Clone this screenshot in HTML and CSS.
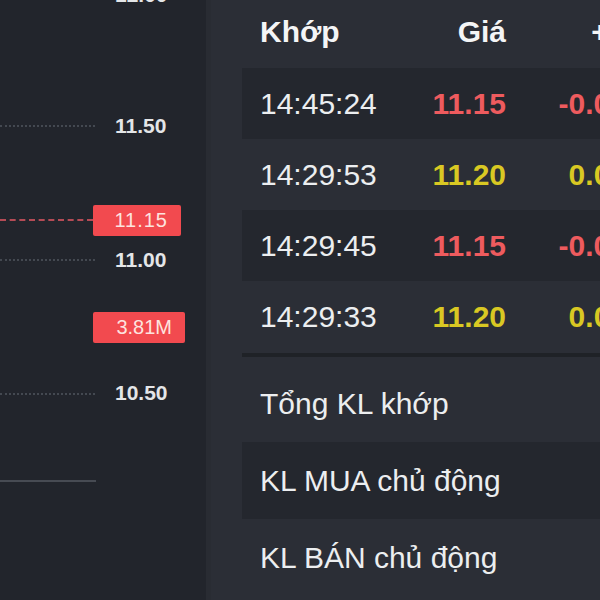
FILE: index.html
```html
<!DOCTYPE html>
<html lang="vi">
<head>
    <meta charset="UTF-8" />
    <title>Khớp lệnh</title>
    <link rel="stylesheet" href="styles.css">
</head>
<body>

<div class="screen">
    <div class="chart">
        <div class="grid-line" style="top: 125px"></div>
        <div class="grid-line" style="top: 259px"></div>
        <div class="grid-line" style="top: 393px"></div>
        <div class="base-line"></div>
        <div class="last-line"></div>

        <span class="axis-label" style="top: -17px">12.00</span>
        <span class="axis-label" style="top: 114px">11.50</span>
        <span class="axis-label" style="top: 248px">11.00</span>
        <span class="axis-label" style="top: 381px">10.50</span>

        <span class="axis-badge price-badge">11.15</span>
        <span class="axis-badge vol-badge">3.81M</span>
    </div>

    <div class="divider"></div>

    <div class="panel">
        <div class="trade-row head">
            <span>Khớp</span>
            <span class="num">Giá</span>
            <span class="num">+/-</span>
        </div>
        <div class="trade-row dark">
            <span>14:45:24</span>
            <span class="num down">11.15</span>
            <span class="num down">-0.05</span>
        </div>
        <div class="trade-row">
            <span>14:29:53</span>
            <span class="num ref">11.20</span>
            <span class="num ref">0.00</span>
        </div>
        <div class="trade-row dark">
            <span>14:29:45</span>
            <span class="num down">11.15</span>
            <span class="num down">-0.05</span>
        </div>
        <div class="trade-row">
            <span>14:29:33</span>
            <span class="num ref">11.20</span>
            <span class="num ref">0.00</span>
        </div>

        <div class="summary">
            <div class="summary-row">Tổng KL khớp</div>
            <div class="summary-row dark">KL MUA chủ động</div>
            <div class="summary-row">KL BÁN chủ động</div>
        </div>
    </div>
</div>

</body>
</html>
```

FILE: styles.css
```css
body {
    font-family: "Liberation Sans", Arial, sans-serif;
    margin: 0;
    padding: 0;
    background-color: #2b2e36;
    color: #eceef0;
    overflow: hidden;
}

.screen {
    display: flex;
    width: 600px;
    height: 600px;
    overflow: hidden;
}

/* price chart, only the right edge with the axis is visible */
.chart {
    position: relative;
    width: 206px;
    flex-shrink: 0;
    background-color: #22252c;
}

.grid-line {
    position: absolute;
    left: 0;
    width: 95px;
    border-top: 2px dotted #444951;
}

.base-line {
    position: absolute;
    left: 0;
    top: 480px;
    width: 96px;
    height: 2px;
    background-color: #474b53;
}

.last-line {
    position: absolute;
    left: 0;
    top: 219px;
    width: 93px;
    border-top: 2px dashed #b54b55;
}

.axis-label {
    position: absolute;
    left: 115px;
    font-size: 21px;
    font-weight: bold;
    line-height: 24px;
    color: #e4e6e8;
}

.axis-badge {
    position: absolute;
    left: 93px;
    height: 31px;
    line-height: 31px;
    padding-right: 13px;
    text-align: right;
    font-size: 20px;
    color: #fde3df;
    background-color: #f24a4f;
    border-radius: 2px;
}

.price-badge {
    top: 205px;
    width: 75px;
    letter-spacing: 1px;
}

.vol-badge {
    top: 312px;
    width: 79px;
}

.divider {
    width: 5px;
    flex-shrink: 0;
    background-color: #292c33;
}

/* matched trades panel */
.panel {
    flex: 1;
    padding-left: 31px;
    background-color: #2b2e36;
}

.trade-row {
    display: grid;
    grid-template-columns: 148px 98px 121px;
    align-items: center;
    width: 400px;
    height: 71px;
    padding-left: 18px;
    font-size: 30px;
}

.trade-row.head {
    height: 68px;
    padding-bottom: 4px;
    box-sizing: border-box;
    font-weight: bold;
    color: #f4f5f6;
}

.dark {
    background-color: #24272e;
}

.num {
    text-align: right;
    font-weight: bold;
}

.down {
    color: #ee5b5e;
}

.ref {
    color: #d9c823;
}

.summary {
    margin-top: 1px;
    padding-top: 8px;
    border-top: 4px solid #1f2227;
}

.summary-row {
    height: 77px;
    line-height: 77px;
    padding-left: 18px;
    font-size: 30px;
    color: #eceef0;
}
```
